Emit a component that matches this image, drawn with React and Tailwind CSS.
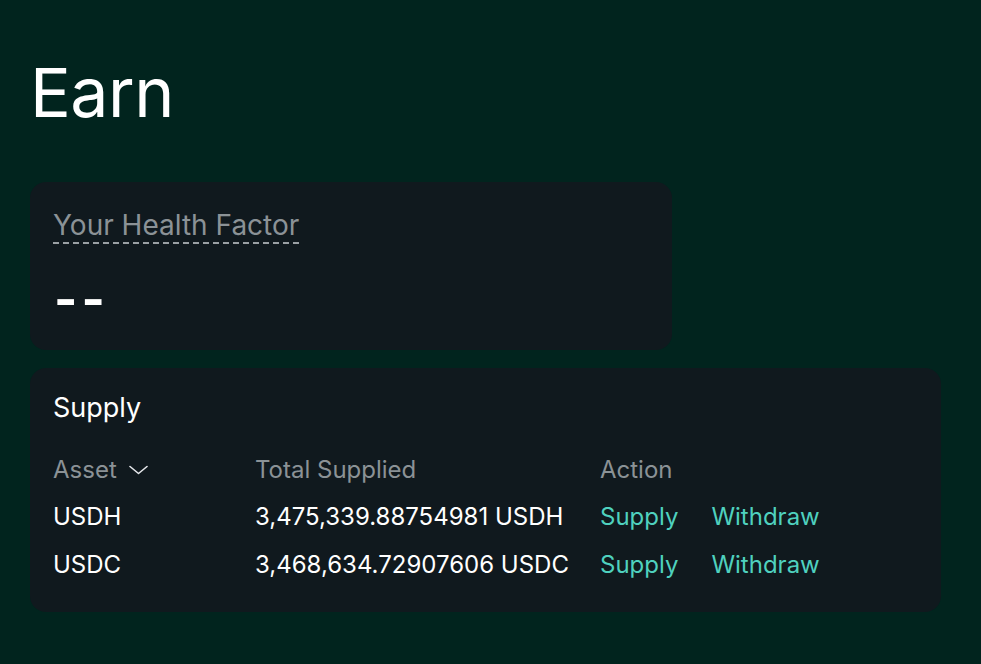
import React from "react";

const assets = [
  { symbol: "USDH", supplied: "3,475,339.88754981 USDH" },
  { symbol: "USDC", supplied: "3,468,634.72907606 USDC" },
];

const ChevronDown = () => (
  <svg width="19" height="10" viewBox="0 0 19 10" fill="none" className="ml-3">
    <path d="M1 1.5L9.5 8.5L18 1.5" stroke="#e5e7eb" strokeWidth="1.6" strokeLinecap="round" strokeLinejoin="round" />
  </svg>
);

export default function App() {
  return (
    <div className="min-h-screen w-full bg-[#01241e] text-white px-[30px] pt-[50px] pb-10" style={{ fontFamily: "Inter, 'Noto Sans', sans-serif" }}>
      <h1 className="text-[68px] leading-[84px] font-normal tracking-[-0.5px]">Earn</h1>

      <div className="mt-[48px] w-[642px] h-[168px] rounded-[16px] bg-[#10191e] px-[23px] pt-[26px]">
        <span className="text-[28px] leading-[34px] text-[#8b9296] border-b-2 border-dashed border-[#9aa0a4]">
          Your Health Factor
        </span>
        <div className="mt-[33px] text-[50px] leading-[48px] font-bold tracking-[4px] pl-[1px]">--</div>
      </div>

      <div className="mt-[18px] w-[911px] h-[244px] rounded-[16px] bg-[#10191e] px-[23px] pt-[22px]">
        <div className="text-[27px] leading-[36px]">Supply</div>
        <table className="mt-[21px] text-left text-[24px]">
          <thead>
            <tr className="text-[#8b9296] h-[46px]">
              <th className="font-normal w-[202px] p-0">
                <span className="inline-flex items-center">Asset <ChevronDown /></span>
              </th>
              <th className="font-normal w-[345px] p-0">Total Supplied</th>
              <th className="font-normal p-0">Action</th>
            </tr>
          </thead>
          <tbody>
            {assets.map((a) => (
              <tr key={a.symbol} className="h-[48px]">
                <td className="p-0">{a.symbol}</td>
                <td className="p-0">{a.supplied}</td>
                <td className="p-0">
                  <div className="flex gap-[33px] text-[#4fd1bf]">
                    <span>Supply</span>
                    <span>Withdraw</span>
                  </div>
                </td>
              </tr>
            ))}
          </tbody>
        </table>
      </div>
    </div>
  );
}
